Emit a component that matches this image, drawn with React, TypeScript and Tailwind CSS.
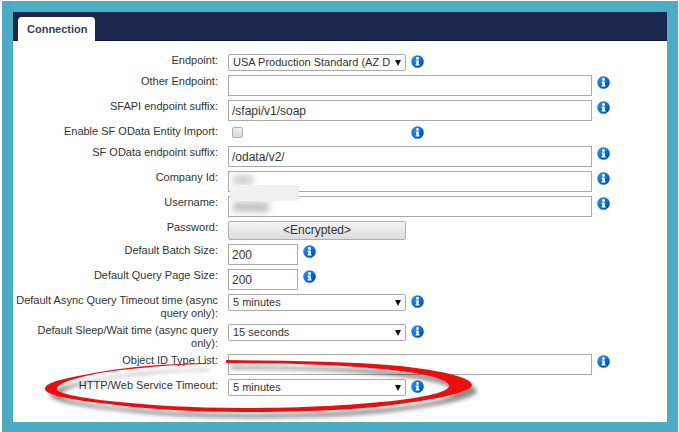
import { useId } from 'react';
import type { ReactNode } from 'react';

function InfoIcon() {
  const id = useId();
  return (
    <svg viewBox="0 0 13 13" className="mt-px h-[13px] w-[13px] shrink-0" aria-hidden="true">
      <defs>
        <linearGradient id={id} x1="0" y1="0" x2="1" y2="1">
          <stop offset="0" stopColor="#2a9cf4" />
          <stop offset="0.5" stopColor="#0a70e0" />
          <stop offset="1" stopColor="#0338a8" />
        </linearGradient>
      </defs>
      <circle cx="6.5" cy="6.5" r="6.3" fill={`url(#${id})`} />
      <circle cx="6.5" cy="3.5" r="1.4" fill="#fff" />
      <path d="M4.6 5.4h3.2v3.8h.8v1.4H4.6V9.2h.7V6.7h-.7z" fill="#fff" />
    </svg>
  );
}

interface RowProps {
  id: string;
  label: string;
  info?: boolean;
  children: ReactNode;
}

function Row({ id, label, info = true, children }: RowProps) {
  return (
    <div className="flex items-start">
      <label htmlFor={id} className="mr-[10px] w-[205px] shrink-0 text-right text-[11px] leading-[13px]">
        {label}
      </label>
      {children}
      {info && (
        <span className="ml-[5px]">
          <InfoIcon />
        </span>
      )}
    </div>
  );
}

function TextRow({ id, label, value = '' }: { id: string; label: string; value?: string }) {
  return (
    <Row id={id} label={label}>
      <input
        id={id}
        type="text"
        defaultValue={value}
        className="h-[21px] min-w-0 flex-1 border border-[#a9a9a9] bg-white px-[3px] text-[12px]"
      />
    </Row>
  );
}

function NumberRow({ id, label, value }: { id: string; label: string; value: string }) {
  return (
    <Row id={id} label={label}>
      <input
        id={id}
        type="text"
        defaultValue={value}
        className="h-[21px] w-[70px] border border-[#a9a9a9] bg-white px-[3px] text-[12px]"
      />
    </Row>
  );
}

function SelectRow({ id, label, value }: { id: string; label: string; value: string }) {
  return (
    <Row id={id} label={label}>
      <div className="relative w-[178px] shrink-0">
        <select
          id={id}
          className="block h-[17px] w-full appearance-none rounded-[2px] border border-[#a9a9a9] bg-white pl-1 pr-3 text-[11px] leading-[15px]"
        >
          <option>{value}</option>
        </select>
        <svg viewBox="0 0 6 6" className="pointer-events-none absolute right-[5px] top-[6px] h-[6px] w-[6px]">
          <path d="M0 0h6L3 6z" fill="#111" />
        </svg>
      </div>
    </Row>
  );
}

function RedactedRow({ id, label, children }: { id: string; label: string; children: ReactNode }) {
  return (
    <div className="relative">
      <TextRow id={id} label={label} />
      {children}
    </div>
  );
}

// hand drawn marker loop around the last row
function Marker() {
  return (
    <svg
      viewBox="0 0 440 64"
      className="pointer-events-none absolute -top-[20px] left-[30px] h-[64px] w-[440px] overflow-visible"
    >
      <defs>
        <filter id="marker-shadow" x="-5%" y="-20%" width="110%" height="150%">
          <feDropShadow dx="5" dy="6" stdDeviation="2" floodColor="#000" floodOpacity="0.45" />
        </filter>
      </defs>
      <path
        filter="url(#marker-shadow)"
        fill="#ee1111"
        d="M162 4C118 5 84 8 57 13C22 19 2 23 2 30C2 35 22 40 57 44C100 50 150 53 200 53C262 53 315 51 357 45C402 39 429 32 429 26C429 19 402 12 357 7C305 2 245 2 183 1L183 4C245 4 305 6 357 12C388 16 406 21 406 27C406 32 388 37 357 41C315 46 262 49 200 49C150 49 100 46 57 41C30 37 14 34 14 30C14 25 30 19 57 14C84 10 118 6 162 5z"
      />
    </svg>
  );
}

export default function App() {
  return (
    <div className="bg-white pl-[2px] pr-px pt-px font-['Liberation_Sans',Arial,sans-serif] text-[#333]">
      <div className="border-[11px] border-b-[10px] border-[#4bacc6] bg-white">
        <header className="flex h-[29px] items-end border-b border-[#0d1838] bg-[#19294d] pl-[5px]">
          <button className="-mb-px h-[24px] rounded-t-[4px] bg-white pl-[9px] pr-[7px] text-[11px] font-bold text-[#33415f]">
            Connection
          </button>
        </header>

        <form className="flex flex-col gap-1 pb-[26px] pr-[57px] pt-[13px]">
          <SelectRow id="endpoint" label="Endpoint:" value="USA Production Standard (AZ D" />
          <TextRow id="other" label="Other Endpoint:" />
          <TextRow id="sfapi" label="SFAPI endpoint suffix:" value="/sfapi/v1/soap" />
          <Row id="odata-import" label="Enable SF OData Entity Import:">
            <div className="h-[17px] w-[178px] shrink-0">
              <input
                id="odata-import"
                type="checkbox"
                className="ml-1 mt-[2px] block h-[11px] w-[11px] appearance-none rounded-[2px] border border-[#b0b0b0] bg-linear-to-b from-[#efefef] to-[#dcdcdc]"
              />
            </div>
          </Row>
          <TextRow id="odata" label="SF OData endpoint suffix:" value="/odata/v2/" />
          <RedactedRow id="company" label="Company Id:">
            <span className="absolute left-[220px] top-1 h-[10px] w-[20px] bg-[#d2d0d1] blur-[3px]" />
            <span className="absolute left-[217px] top-[14px] z-10 h-4 w-[69px] bg-[#f1f1f1]" />
          </RedactedRow>
          <RedactedRow id="username" label="Username:">
            <span className="absolute left-[220px] top-[6px] h-[10px] w-[36px] bg-[#c4c0c5] blur-[3px]" />
          </RedactedRow>
          <Row id="password" label="Password:" info={false}>
            <button
              id="password"
              type="button"
              className="h-[19px] w-[178px] rounded-[2px] border border-[#b0b0b0] bg-linear-to-b from-[#f4f4f4] to-[#dddddd] text-[12px] leading-[17px]"
            >
              &lt;Encrypted&gt;
            </button>
          </Row>
          <NumberRow id="batch" label="Default Batch Size:" value="200" />
          <NumberRow id="page" label="Default Query Page Size:" value="200" />
          <SelectRow id="async" label="Default Async Query Timeout time (async query only):" value="5 minutes" />
          <SelectRow id="sleep" label="Default Sleep/Wait time (async query only):" value="15 seconds" />
          <TextRow id="types" label="Object ID Type List:" />
          <div className="relative">
            <SelectRow id="http" label="HTTP/Web Service Timeout:" value="5 minutes" />
            <Marker />
          </div>
        </form>
      </div>
    </div>
  );
}
